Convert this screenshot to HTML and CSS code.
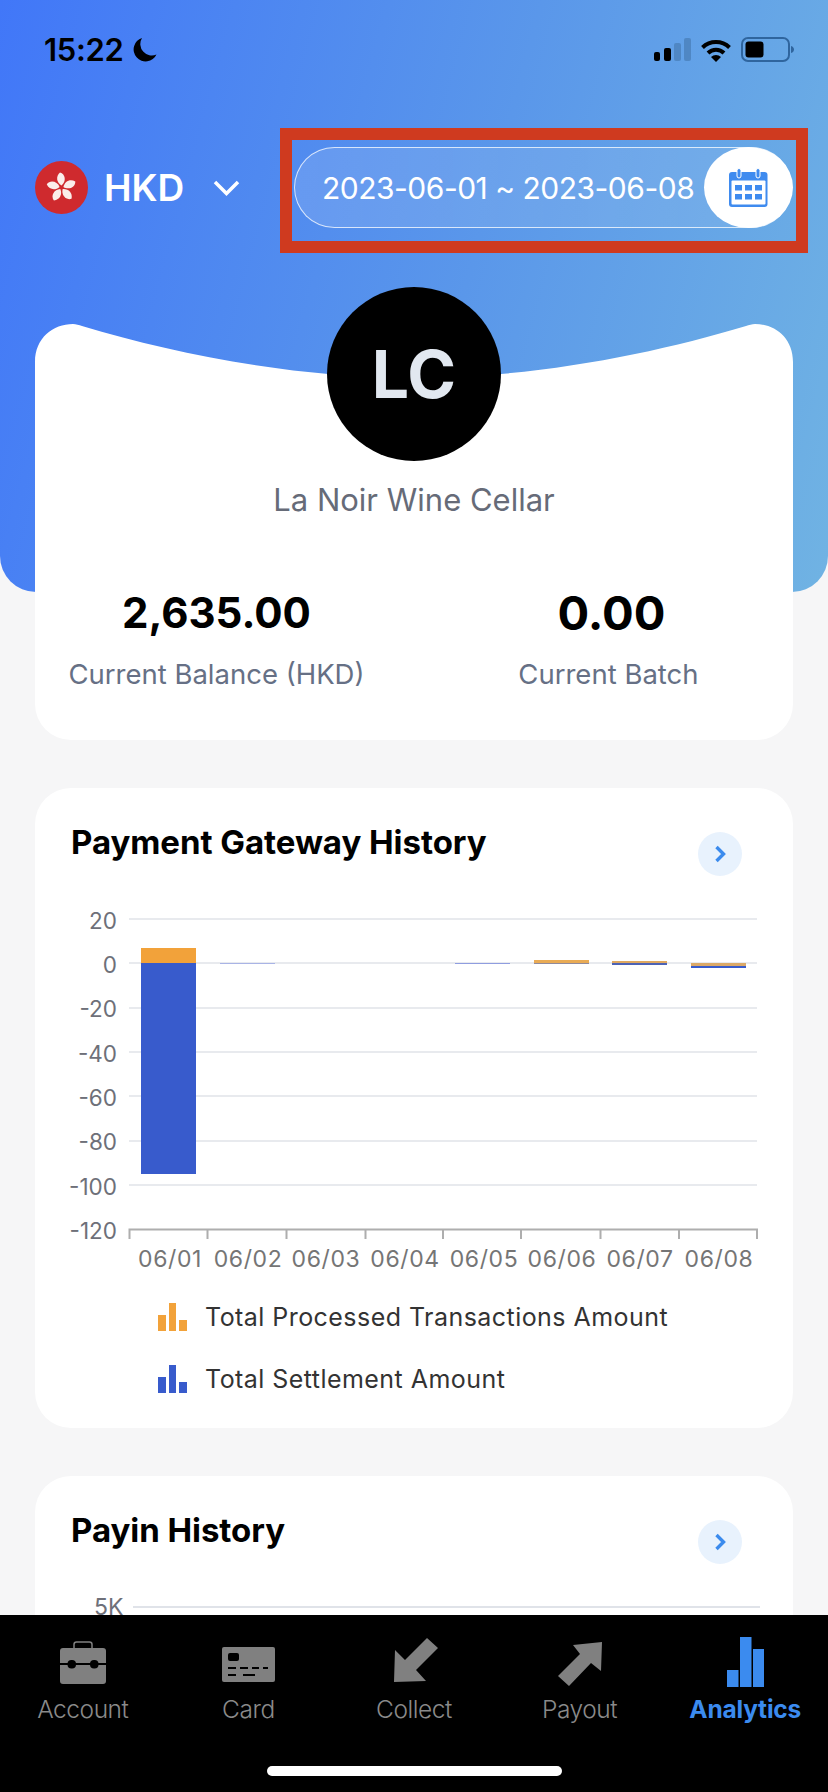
FILE: index.html
```html
<!DOCTYPE html>
<html lang="en">
<head>
<meta charset="utf-8">
<title>Analytics</title>
<link rel="stylesheet" href="styles.css">
</head>
<body>
<div class="screen">
  <div class="hero-backdrop"></div>

  <div class="status">
    <div class="status-left">
      <span class="clock">15:22</span>
      <svg class="moon" viewBox="0 0 24 25"><path d="M9 1A12 12 0 1 0 23.500 17.500A11.500 11.500 0 0 1 9 1Z" fill="#000"/></svg>
    </div>
    <div class="status-right">
      <svg class="signal" viewBox="0 0 37 23">
        <rect x="0" y="14" width="6" height="9" rx="2" fill="#000"/>
        <rect x="10" y="10" width="7" height="13" rx="2" fill="#000"/>
        <rect x="20" y="5" width="7" height="18" rx="2" fill="#4f87c4"/>
        <rect x="30" y="0" width="7" height="23" rx="2" fill="#4f87c4"/>
      </svg>
      <svg class="wifi" viewBox="0 0 32 24">
        <path d="M2.500 9.500A19.500 19.500 0 0 1 29.500 9.500" fill="none" stroke="#000" stroke-width="4"/>
        <path d="M8 15A11.500 11.500 0 0 1 24 15" fill="none" stroke="#000" stroke-width="4"/>
        <path d="M16 24L11 19A7.500 7.500 0 0 1 21 19Z" fill="#000"/>
      </svg>
      <svg class="battery" viewBox="0 0 53 25">
        <rect x="1" y="1" width="47" height="23" rx="6" fill="none" stroke="#2f659e" stroke-width="2"/>
        <rect x="4.500" y="4.500" width="18" height="16" rx="3" fill="#000"/>
        <path d="M50 9C52 9.500 53 11 53 12.500C53 14 52 15.500 50 16Z" fill="#2f659e"/>
      </svg>
    </div>
  </div>

  <div class="toolbar">
    <div class="currency">
      <svg class="flag" viewBox="0 0 53 53">
        <circle cx="26.500" cy="26.500" r="26.500" fill="#cf2a2e"/>
        <g fill="#fbeeea" transform="translate(26.500 26.500)">
          <path id="petal" d="M0 -2C-5 -5 -6 -11 -1.500 -15C4 -13.500 5 -6 0 -2Z"/>
          <use href="#petal" transform="rotate(72)"/>
          <use href="#petal" transform="rotate(144)"/>
          <use href="#petal" transform="rotate(216)"/>
          <use href="#petal" transform="rotate(288)"/>
        </g>
      </svg>
      <span class="code">HKD</span>
      <svg class="caret" viewBox="0 0 27 16"><path d="M2 2L13.500 13.500L25 2" fill="none" stroke="#fff" stroke-width="3.500"/></svg>
    </div>
    <div class="highlight">
      <div class="range">
        <span class="range-text">2023-06-01 ~ 2023-06-08</span>
        <span class="range-btn">
          <svg class="calendar" viewBox="0 0 39 39">
            <path d="M3 4H35.500A3 3 0 0 1 38.500 7V36A3 3 0 0 1 35.500 39H3A3 3 0 0 1 0 36V7A3 3 0 0 1 3 4Z" fill="#3f8bef"/>
            <rect x="2.500" y="12.500" width="34" height="24" rx="1" fill="#fff"/>
            <rect x="8" y="0.500" width="4" height="9.500" rx="2" fill="#3f8bef" stroke="#fff" stroke-width="1"/>
            <rect x="27" y="0.500" width="4" height="9.500" rx="2" fill="#3f8bef" stroke="#fff" stroke-width="1"/>
            <g fill="#3f8bef">
              <rect x="6" y="17" width="7" height="5.500"/><rect x="16" y="17" width="7" height="5.500"/><rect x="26" y="17" width="7" height="5.500"/>
              <rect x="6" y="26" width="7" height="5.500"/><rect x="16" y="26" width="7" height="5.500"/><rect x="26" y="26" width="7" height="5.500"/>
            </g>
          </svg>
        </span>
      </div>
    </div>
  </div>

  <section class="profile">
    <svg class="profile-shape" viewBox="0 0 758 416" preserveAspectRatio="none">
      <path d="M0 38C0 14 18 0 38 0C41 0 44 1 47 2C140 30 260 54 379 54C498 54 618 30 711 2C714 1 717 0 720 0C740 0 758 14 758 38V380A36 36 0 0 1 722 416H36A36 36 0 0 1 0 380Z" fill="#fff"/>
    </svg>
    <div class="avatar">LC</div>
    <div class="merchant">La Noir Wine Cellar</div>
    <div class="stats">
      <div class="stat stat-balance">
        <div class="stat-value">2,635.00</div>
        <div class="stat-label">Current Balance (HKD)</div>
      </div>
      <div class="stat stat-batch">
        <div class="stat-value">0.00</div>
        <div class="stat-label">Current Batch</div>
      </div>
    </div>
  </section>

  <section class="card card-gateway">
    <div class="card-head">
      <h2 class="card-title">Payment Gateway History</h2>
      <span class="more"><svg class="more-icon" viewBox="0 0 12 18"><path d="M2.500 2L9.500 9L2.500 16" fill="none" stroke="#3b8bed" stroke-width="3.400"/></svg></span>
    </div>
    <svg class="chart" viewBox="35 900 758 380">
      <g class="grid">
        <line x1="129" x2="757" y1="919" y2="919"/>
        <line x1="129" x2="757" y1="963" y2="963"/>
        <line x1="129" x2="757" y1="1008" y2="1008"/>
        <line x1="129" x2="757" y1="1052" y2="1052"/>
        <line x1="129" x2="757" y1="1096" y2="1096"/>
        <line x1="129" x2="757" y1="1141" y2="1141"/>
        <line x1="129" x2="757" y1="1185" y2="1185"/>
      </g>
      <g class="y-labels">
        <text x="117" y="929">20</text>
        <text x="117" y="973">0</text>
        <text x="117" y="1017">-20</text>
        <text x="117" y="1062">-40</text>
        <text x="117" y="1106">-60</text>
        <text x="117" y="1150">-80</text>
        <text x="117" y="1195">-100</text>
        <text x="117" y="1239">-120</text>
      </g>
      <path class="axis" d="M129.500 1239V1229.500H757V1239M207.500 1229.500V1239M286.500 1229.500V1239M365.500 1229.500V1239M443 1229.500V1239M521 1229.500V1239M600.500 1229.500V1239M679 1229.500V1239"/>
      <g class="x-labels">
        <text x="170" y="1267">06/01</text>
        <text x="248" y="1267">06/02</text>
        <text x="326" y="1267">06/03</text>
        <text x="405" y="1267">06/04</text>
        <text x="484" y="1267">06/05</text>
        <text x="562" y="1267">06/06</text>
        <text x="640" y="1267">06/07</text>
        <text x="719" y="1267">06/08</text>
      </g>
      <rect x="141" y="948" width="55" height="15" fill="#f2a23a"/>
      <rect x="141" y="963" width="55" height="211" fill="#385bcc"/>
      <rect x="220" y="963" width="55" height="1" fill="#a9b4e6"/>
      <rect x="455" y="963" width="55" height="1" fill="#8f9de0"/>
      <rect x="534" y="960" width="55" height="3" fill="#e9ab55"/>
      <rect x="534" y="963" width="55" height="1" fill="#8f8a9c"/>
      <rect x="612" y="961" width="55" height="2" fill="#e0a960"/>
      <rect x="612" y="963" width="55" height="2" fill="#4d63b5"/>
      <rect x="691" y="963" width="55" height="3" fill="#dba968"/>
      <rect x="691" y="966" width="55" height="2" fill="#385bcc"/>
    </svg>
    <ul class="legend">
      <li class="legend-item">
        <svg class="legend-icon legend-orange" viewBox="0 0 29 28"><rect x="0" y="12" width="8" height="16"/><rect x="11" y="0" width="7" height="28"/><rect x="21" y="17" width="8" height="11"/></svg>
        <span>Total Processed Transactions Amount</span>
      </li>
      <li class="legend-item">
        <svg class="legend-icon legend-blue" viewBox="0 0 29 28"><rect x="0" y="12" width="8" height="16"/><rect x="11" y="0" width="7" height="28"/><rect x="21" y="17" width="8" height="11"/></svg>
        <span>Total Settlement Amount</span>
      </li>
    </ul>
  </section>

  <section class="card card-payin">
    <div class="card-head">
      <h2 class="card-title">Payin History</h2>
      <span class="more"><svg class="more-icon" viewBox="0 0 12 18"><path d="M2.500 2L9.500 9L2.500 16" fill="none" stroke="#3b8bed" stroke-width="3.400"/></svg></span>
    </div>
    <div class="payin-row">
      <span class="payin-tick">5K</span>
      <span class="payin-line"></span>
    </div>
  </section>

  <nav class="tabbar">
    <div class="tabs">
      <div class="tab">
        <span class="tab-icon">
          <svg class="ic-account" viewBox="0 0 46 44">
            <path d="M14 9V4.500A2.500 2.500 0 0 1 16.500 2H29.500A2.500 2.500 0 0 1 32 4.500V9" fill="none" stroke="#808080" stroke-width="1.500"/>
            <path d="M3 8H43A3 3 0 0 1 46 11V41A3 3 0 0 1 43 44H3A3 3 0 0 1 0 41V11A3 3 0 0 1 3 8Z" fill="#808080"/>
            <path d="M0 24H46" stroke="#000" stroke-width="2"/>
            <rect x="7.500" y="20" width="8.500" height="8.500" rx="4" fill="#000"/>
            <rect x="30" y="20" width="8.500" height="8.500" rx="4" fill="#000"/>
          </svg>
        </span>
        <span class="tab-label">Account</span>
      </div>
      <div class="tab">
        <span class="tab-icon">
          <svg class="ic-card" viewBox="0 0 53 35">
            <rect width="53" height="35" rx="2" fill="#808080"/>
            <rect x="6" y="6" width="11" height="8" rx="2" fill="#000"/>
            <path d="M6 21H14M18 21H26M30 21H37M41 21H46M6 28H14M21 28H33" stroke="#000" stroke-width="2"/>
          </svg>
        </span>
        <span class="tab-label">Card</span>
      </div>
      <div class="tab">
        <span class="tab-icon">
          <svg class="ic-arrow ic-collect" viewBox="0 0 44 44"><path d="M33 0L44 10L22 32L32 43L0 44L1 12L11 22Z" fill="#808080"/></svg>
        </span>
        <span class="tab-label">Collect</span>
      </div>
      <div class="tab">
        <span class="tab-icon">
          <svg class="ic-arrow ic-payout" viewBox="0 0 44 44"><path d="M11 44L0 34L22 12L15 3L44 0L43 29L33 21Z" fill="#808080"/></svg>
        </span>
        <span class="tab-label">Payout</span>
      </div>
      <div class="tab tab-active">
        <span class="tab-icon">
          <svg class="ic-bars" viewBox="0 0 37 50"><rect x="0" y="33" width="11.500" height="17" fill="#3b8bef"/><rect x="13" y="0" width="11.500" height="50" fill="#3b8bef"/><rect x="26" y="12" width="11" height="38" fill="#3b8bef"/></svg>
        </span>
        <span class="tab-label">Analytics</span>
      </div>
    </div>
    <div class="home-bar"></div>
  </nav>
</div>
</body>
</html>
```
FILE: styles.css
```css
* { box-sizing: border-box; }
html, body { margin: 0; padding: 0; }
body { background: #f6f6f7; font-family: Inter, "Liberation Sans", sans-serif; }
svg { display: block; }

.screen {
  position: relative;
  width: 828px;
  height: 1792px;
  overflow: hidden;
  background: #f6f6f7;
}

.hero-backdrop {
  position: absolute;
  left: 0;
  top: 0;
  width: 828px;
  height: 592px;
  border-radius: 0 0 36px 36px;
  background: linear-gradient(105deg, #4177f8 0%, #5a97ea 55%, #70b3e3 100%);
}

/* status bar */
.status {
  position: relative;
  display: flex;
  justify-content: space-between;
  align-items: center;
  height: 62px;
  padding: 37px 34px 0 44px;
}
.status-left { display: flex; align-items: center; gap: 9px; }
.clock { font-size: 31px; font-weight: 600; line-height: 25px; letter-spacing: -.3px; color: #000; }
.moon { width: 24px; height: 25px; }
.status-right { display: flex; align-items: center; gap: 9px; }
.signal { width: 37px; height: 23px; }
.wifi { width: 32px; height: 24px; }
.battery { width: 53px; height: 25px; }

/* currency + date range */
.toolbar {
  position: relative;
  display: flex;
  justify-content: space-between;
  align-items: flex-start;
  margin-top: 66px;
  padding: 0 20px 0 35px;
}
.currency { display: flex; align-items: center; height: 53px; margin-top: 33px; }
.flag { width: 53px; height: 53px; }
.code { margin-left: 16px; font-size: 37px; font-weight: 600; color: #fff; line-height: 53px; }
.caret { width: 27px; height: 16px; margin-left: 29px; margin-top: 1px; }
.highlight {
  width: 528px;
  height: 125px;
  padding: 7px 4px 0 2px;
  border: 12px solid #cf3a1f;
}
.range {
  display: flex;
  align-items: center;
  height: 81px;
  padding-left: 27px;
  border: 1.500px solid rgba(255, 255, 255, .75);
  border-radius: 41px;
  background: linear-gradient(90deg, rgba(255, 255, 255, .12), rgba(255, 255, 255, .08));
}
.range-text { flex: 1; font-size: 30px; font-weight: 400; letter-spacing: -.5px; color: #fff; white-space: nowrap; }
.range-btn {
  display: flex;
  align-items: center;
  justify-content: center;
  width: 89px;
  height: 81px;
  margin: 0 -1.500px;
  border-radius: 50%;
  background: #fff;
}
.calendar { width: 39px; height: 39px; }

/* profile card */
.profile {
  position: relative;
  display: flex;
  flex-direction: column;
  align-items: center;
  height: 416px;
  margin: 71px 35px 0;
}
.profile-shape {
  position: absolute;
  left: 0;
  top: 0;
  width: 100%;
  height: 100%;
}
.avatar {
  position: relative;
  display: flex;
  align-items: center;
  justify-content: center;
  width: 174px;
  height: 174px;
  margin-top: -37px;
  border-radius: 50%;
  background: #000;
  color: #e2e8f0;
  font-size: 66px;
  font-weight: 700;
}
.merchant {
  position: relative;
  margin-top: 19px;
  font-size: 31px;
  line-height: 40px;
  font-weight: 400;
  color: #666b78;
}
.stats {
  position: relative;
  display: flex;
  width: 100%;
  margin-top: 68px;
}
.stat { display: flex; flex-direction: column; align-items: center; }
.stat-balance { width: 55%; padding-right: 54px; }
.stat-batch { width: 45%; padding-right: 28px; }
.stat-value { font-size: 42px; font-weight: 700; line-height: 50px; color: #000; }
.stat-batch .stat-value { font-size: 47px; margin-left: 6px; }
.stat-label { margin-top: 18px; font-size: 27.500px; line-height: 36px; color: #667085; white-space: nowrap; }

/* chart cards */
.card {
  margin: 48px 35px 0;
  border-radius: 36px;
  background: #fff;
}
.card-gateway { height: 640px; }
.card-payin { height: 200px; }
.card-head {
  display: flex;
  justify-content: space-between;
  align-items: flex-start;
  padding: 28px 51px 0 36px;
}
.card-title {
  margin: 0;
  font-size: 33px;
  line-height: 52px;
  font-weight: 700;
  letter-spacing: -.05px;
  color: #000;
}
.more {
  display: flex;
  align-items: center;
  justify-content: center;
  width: 44px;
  height: 44px;
  margin-top: 16px;
  border-radius: 50%;
  background: #e8f2fd;
}
.more-icon { width: 12px; height: 18px; }
.chart {
  width: 758px;
  height: 380px;
  margin-top: 24px;
}
.chart text { font-family: Inter, "Liberation Sans", sans-serif; font-size: 22.500px; }
.grid line { stroke: #e0e3e9; stroke-width: 1.500; }
.y-labels text { text-anchor: end; fill: #6e7079; }
.x-labels text { text-anchor: middle; fill: #757575; font-size: 23px; letter-spacing: .6px; }
.axis { fill: none; stroke: #aeaeae; stroke-width: 2; }

.legend {
  display: flex;
  flex-direction: column;
  gap: 26px;
  margin: 19px 0 0;
  padding: 0 0 0 123px;
  list-style: none;
}
.legend-item {
  display: flex;
  align-items: center;
  gap: 18px;
  height: 36px;
  font-size: 25px;
  letter-spacing: .45px;
  color: #333;
}
.legend-icon { width: 29px; height: 28px; flex: none; }
.legend-orange { fill: #f2a23a; }
.legend-blue { fill: #385bcc; }

.payin-row { display: flex; align-items: center; gap: 10px; margin-top: 30px; padding-left: 59px; }
.payin-tick { font-size: 23px; line-height: 26px; color: #6e7079; }
.payin-line { width: 627px; height: 1.500px; background: #e0e3e9; }

/* tab bar */
.tabbar {
  position: absolute;
  left: 0;
  bottom: 0;
  width: 828px;
  height: 177px;
  background: #000;
}
.tabs {
  display: grid;
  grid-template-columns: repeat(5, 1fr);
  padding-top: 21px;
}
.tab { display: flex; flex-direction: column; align-items: center; }
.tab-icon { display: flex; align-items: flex-end; justify-content: center; height: 52px; }
.tab-label {
  margin-top: 5px;
  font-size: 24.500px;
  line-height: 32px;
  font-weight: 300;
  letter-spacing: -.45px;
  color: #8a8a8a;
  white-space: nowrap;
}
.tab-active .tab-label { font-weight: 700; color: #3b8bef; letter-spacing: -.2px; }
.ic-account { width: 46px; height: 44px; margin-bottom: 4px; }
.ic-card { width: 53px; height: 35px; margin-bottom: 6px; }
.ic-arrow { width: 44px; height: 44px; }
.ic-collect { margin: 0 0 6px 4px; }
.ic-payout { margin-bottom: 2px; }
.ic-bars { width: 37px; height: 50px; margin-bottom: 1px; }
.home-bar {
  position: absolute;
  left: 267px;
  top: 151px;
  width: 295px;
  height: 10px;
  border-radius: 5px;
  background: #fff;
}
```
